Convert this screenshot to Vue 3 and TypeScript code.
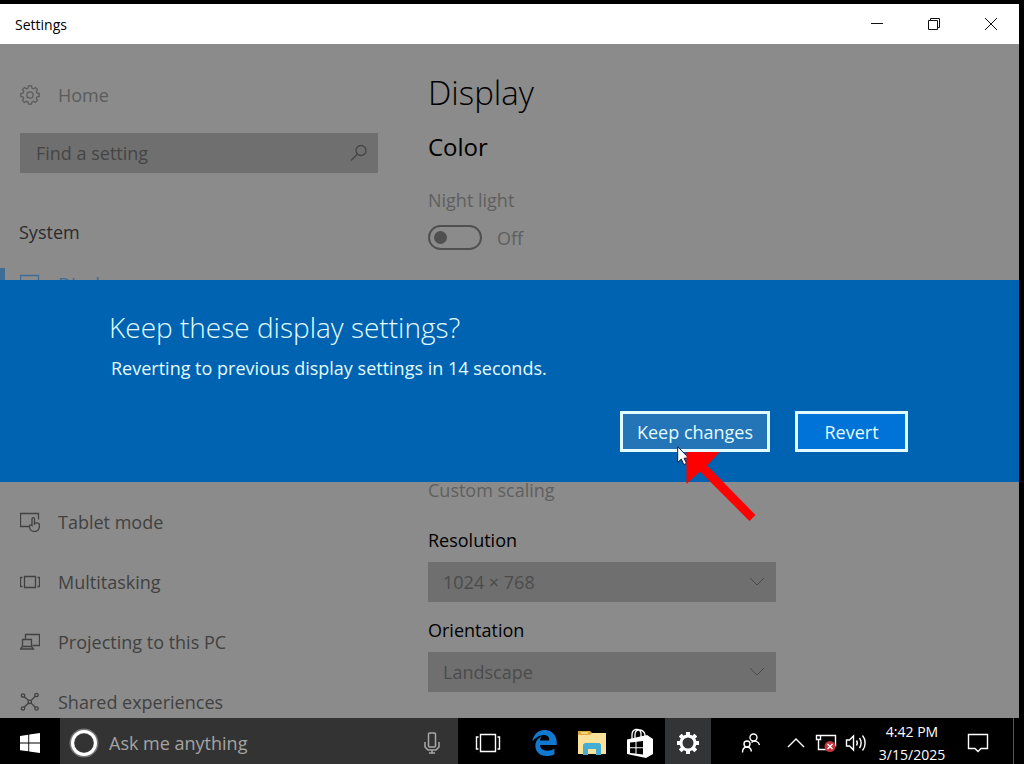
<script setup lang="ts">
import { ref } from 'vue'

const search = ref('')
const ask = ref('')
const nightLight = ref(false)
const resolution = ref('1024 × 768')
const orientation = ref('Landscape')
</script>

<template>
  <div class="desktop">
    <div class="window">
      <header class="titlebar">
        <span class="window-title">Settings</span>
        <button class="caption" type="button" aria-label="Minimize">
          <svg width="14" height="14" viewBox="0 0 14 14"><path d="M1 6.500h12" /></svg>
        </button>
        <button class="caption" type="button" aria-label="Restore">
          <svg width="14" height="14" viewBox="0 0 14 14"><path d="M1.500 3.500h9v9h-9zM3.500 3.500v-2h9v9h-2" /></svg>
        </button>
        <button class="caption" type="button" aria-label="Close">
          <svg width="14" height="14" viewBox="0 0 14 14"><path d="M1 1l12 12M13 1L1 13" /></svg>
        </button>
      </header>

      <div class="body">
        <aside class="sidebar">
          <a class="nav-item home" href="#home">
            <svg class="icon" viewBox="0 0 20 20">
              <path d="M8.500 .8h3l.5 2.300 1.500.6 2-1.200 2 2-1.200 2 .6 1.500 2.300.5v3l-2.300.5-.6 1.500 1.200 2-2 2-2-1.200-1.500.6-.5 2.300h-3L8 16.900l-1.500-.6-2 1.200-2-2 1.200-2-.6-1.500-2.300-.5v-3L3.100 8l.6-1.500-1.200-2 2-2 2 1.200L8 3.100z" />
              <circle cx="10" cy="10" r="3.200" />
            </svg>
            Home
          </a>
          <div class="find">
            <input v-model="search" type="text" placeholder="Find a setting" aria-label="Find a setting" />
            <svg class="find-icon" width="18" height="18" viewBox="0 0 18 18"><circle cx="11" cy="6.500" r="5" /><path d="M7.300 10.200L1 16.500" /></svg>
          </div>
          <h2 class="group">System</h2>
          <nav class="nav">
            <a class="nav-item active" href="#display">
              <svg class="icon" viewBox="0 0 20 20"><path d="M.5 1.500h18v12H.5zM5 17.500h9M9.500 14v3" /></svg>
              Display
            </a>
          </nav>
          <nav class="nav lower">
            <a class="nav-item" href="#tablet">
              <svg class="icon" viewBox="0 0 20 20">
                <path d="M9 14.500H.5v-13h18v6" />
                <path d="M12 13.500V6.800c0-1.700 2.500-1.700 2.500 0v4h2.500c1.600 0 2.500 1 2.500 2.500 0 3.600-1.500 6.200-5 6.200-2.800 0-4.600-1.600-5-4.500-.2-1.600 1.200-3 2.500-1.500zM14.500 11v2" />
              </svg>
              Tablet mode
            </a>
            <a class="nav-item" href="#multitasking">
              <svg class="icon" viewBox="0 0 20 20"><path d="M4.500 4.500h11v11h-11zM2.500 5.500h-2v9h2M17.500 5.500h2v9h-2" /></svg>
              Multitasking
            </a>
            <a class="nav-item" href="#projecting">
              <svg class="icon" viewBox="0 0 20 20"><path d="M5.500 7V2.500h14v11h-7M2.500 7.500h9v7h-9zM2.500 14.500l-2 2.500h13l-2-2.500" /></svg>
              Projecting to this PC
            </a>
            <a class="nav-item" href="#shared">
              <svg class="icon" viewBox="0 0 20 20">
                <circle cx="3" cy="3.500" r="1.700" /><circle cx="16.500" cy="3" r="1.700" /><circle cx="3" cy="16.500" r="1.700" /><circle cx="16.500" cy="16.500" r="1.700" /><circle cx="9.800" cy="9.800" r="1.700" />
                <path d="M4.200 4.700l4.400 3.900M11 8.600l4.300-4.300M8.600 11l-4.400 4.300M11 11l4.300 4.300" />
              </svg>
              Shared experiences
            </a>
          </nav>
        </aside>

        <main class="content">
          <h1>Display</h1>
          <h2 class="section">Color</h2>
          <label class="dim" for="night">Night light</label>
          <div class="toggle-row">
            <input id="night" v-model="nightLight" type="checkbox" role="switch" />
            <span>{{ nightLight ? 'On' : 'Off' }}</span>
          </div>
          <a class="dim scaling" href="#scaling">Custom scaling</a>
          <label class="field-label" for="resolution">Resolution</label>
          <div class="select">
            <select id="resolution" v-model="resolution">
              <option>1024 × 768</option>
            </select>
            <svg width="16" height="10" viewBox="0 0 16 10"><path d="M1 1l7 7 7-7" /></svg>
          </div>
          <label class="field-label" for="orientation">Orientation</label>
          <div class="select">
            <select id="orientation" v-model="orientation">
              <option>Landscape</option>
            </select>
            <svg width="16" height="10" viewBox="0 0 16 10"><path d="M1 1l7 7 7-7" /></svg>
          </div>
        </main>

        <div class="overlay">
          <section class="dialog" role="dialog" aria-labelledby="dialog-title">
            <h2 id="dialog-title">Keep these display settings?</h2>
            <p>Reverting to previous display settings in 14 seconds.</p>
            <div class="actions">
              <div class="keep-wrap">
                <button class="keep" type="button">Keep changes</button>
                <svg class="pointer" width="80" height="76" viewBox="0 0 80 76">
                  <path class="cursor" d="M.7.8v15.700l3.600-3.400 2.500 5.500 2.700-1.200-2.400-5.200h5z" />
                  <path class="arrow" d="M9.500 6h33L30 19.500 78.500 69l-6 6L23 25.500 9.500 38z" />
                </svg>
              </div>
              <button class="revert" type="button">Revert</button>
            </div>
          </section>
        </div>
      </div>
    </div>

    <footer class="taskbar">
      <button class="start" type="button" aria-label="Start">
        <svg width="20" height="20" viewBox="0 0 20 20"><path d="M0 2.900l8.300-1.200v7.800H0zM9.200 1.600L20 0v9.500H9.200zM0 10.400h8.300v7.900L0 17.200zM9.200 10.400H20V20L9.200 18.400z" /></svg>
      </button>
      <div class="cortana">
        <svg width="30" height="30" viewBox="0 0 30 30"><circle class="halo" cx="15" cy="15" r="12" /><circle class="ring" cx="15" cy="15" r="11.500" /></svg>
        <input v-model="ask" type="text" placeholder="Ask me anything" aria-label="Ask me anything" />
        <button class="mic" type="button" aria-label="Speak">
          <svg width="16" height="22" viewBox="0 0 16 22"><rect x="4.500" y="1" width="7" height="14" rx="1" /><path d="M1 10v5l3 3h8l3-3v-5M8 18v3M5 21h6" /></svg>
        </button>
      </div>
      <button class="task view" type="button" aria-label="Task view">
        <svg class="line" width="26" height="20" viewBox="0 0 26 20"><path d="M5.500 1.500h15v17h-15zM3.500 4h-2v12h2M22.500 4h2v12h-2" /></svg>
      </button>
      <button class="task" type="button" aria-label="Edge">
        <svg width="27" height="28" viewBox="0 0 512 512"><path fill="#1179d0" d="M25.714 228.163c.111-.162.23-.323.342-.485-.021.162-.045.323-.065.485h-.277zm460.572 15.508c0-44.032-7.754-84.465-28.801-122.405C416.498 47.879 343.912 8.001 258.893 8.001 118.962 7.724 40.617 113.214 26.056 227.679c42.429-61.312 117.073-121.376 220.375-124.966 0 0 109.666 0 99.419 104.957H169.997c6.369-37.386 18.554-58.986 34.339-78.926-75.048 34.900-121.850 96.096-120.742 188.315.83 71.448 50.124 144.836 120.743 171.976 83.357 31.847 192.776 7.200 240.132-21.321V363.307c-80.864 56.494-270.871 60.925-272.255-67.572h314.073v-52.064z" /></svg>
      </button>
      <button class="task" type="button" aria-label="File Explorer">
        <svg width="28" height="24" viewBox="0 0 28 24">
          <path fill="#dba93f" d="M0 0h12l2 2v3H0z" /><path fill="#f8d36f" d="M3 1h7v2H3z" />
          <path fill="#fbe29a" d="M0 4h12l2-2h14v21H0z" />
          <path fill="#45add3" d="M5 24V13.500L7 12h14.500l1.500 1.500V24h-5v-6h-8v6z" /><path fill="#fbe29a" d="M10 18h8v5h-8z" />
        </svg>
      </button>
      <button class="task" type="button" aria-label="Store">
        <svg width="28" height="30" viewBox="0 0 28 30">
          <path fill="none" stroke="#fff" stroke-width="1.300" d="M6 11V7c0-6 7-8 9-2v5M9 10V6c1-6 9-5 10 1v4" />
          <path fill="#fff" fill-rule="evenodd" d="M1 11.500L21 7l6 4v15l-7 4-19-4zM4 14.500v4.800h5.500V14zM10.500 13.800v5.500H17v-6.200zM4 20.300v4.700l5.500.6v-5.300zM10.500 20.300v5.500l6.500.8v-6.300z" />
        </svg>
      </button>
      <button class="task current" type="button" aria-label="Settings">
        <svg width="24" height="24" viewBox="0 0 24 24">
          <circle cx="12" cy="12" r="7" fill="none" stroke="#fff" stroke-width="3" />
          <path stroke="#fff" stroke-width="4" d="M12 1v4M12 19v4M1 12h4M19 12h4M4.200 4.200L7 7M17 17l2.800 2.800M4.200 19.800L7 17M17 7l2.800-2.800" />
        </svg>
      </button>
      <div class="tray">
        <button class="people" type="button" aria-label="People">
          <svg class="line" width="20" height="20" viewBox="0 0 20 20"><circle cx="12.500" cy="4.500" r="3.500" /><circle cx="6" cy="11" r="3" /><path d="M1.500 19.500c0-3 1.500-5.500 4.500-5.500s4 2 4.500 4.500M10.500 9.500c3-2.500 7-1.500 8 2.500" /></svg>
        </button>
        <button type="button" aria-label="Show hidden icons">
          <svg class="line" width="18" height="10" viewBox="0 0 18 10"><path d="M1 9l8-8 8 8" /></svg>
        </button>
        <button type="button" aria-label="Network">
          <svg class="line" width="22" height="20" viewBox="0 0 22 20">
            <path d="M6 2.500h14.500v11M1.500 2.500h4v4h-4zM3.500 6.500v10h9" />
            <circle cx="15" cy="13.500" r="5.500" fill="#c3343c" stroke="none" /><path d="M12.500 11l5 5M17.500 11l-5 5" />
          </svg>
        </button>
        <button type="button" aria-label="Volume">
          <svg class="line" width="22" height="18" viewBox="0 0 22 18"><path d="M1.500 6h3l4-4v14l-4-4h-3zM11.500 6.500c1 1.500 1 3.500 0 5M14.500 4c2 3 2 7 0 10M17.500 1.500c3.500 4 3.500 11 0 15" /></svg>
        </button>
        <time class="clock" datetime="2025-03-15T16:42"><span>4:42 PM</span><span>3/15/2025</span></time>
        <button class="notices" type="button" aria-label="Action center">
          <svg class="line" width="22" height="20" viewBox="0 0 22 20"><path d="M1.500 1.500h19v14h-6.500L11 18.500l-3-3H1.500z" /></svg>
        </button>
        <button class="peek" type="button" aria-label="Show desktop"></button>
      </div>
    </footer>
  </div>
</template>

<style>
body {
  background: #000;
}
</style>

<style scoped>
* {
  box-sizing: border-box;
}

.desktop {
  display: flex;
  flex-direction: column;
  height: 100vh;
  padding-top: 4px;
  background: #000;
  font-family: "Open Sans", "Noto Sans", sans-serif;
  font-size: 18px;
  line-height: 24px;
}

button,
input,
select {
  margin: 0;
  padding: 0;
  border: 0;
  background: none;
  color: inherit;
  font: inherit;
}

button {
  display: flex;
  align-items: center;
  justify-content: center;
}

h1,
h2,
p {
  margin: 0;
  font-weight: 400;
}

svg {
  display: block;
  flex: none;
}

.window {
  flex: 1;
  display: flex;
  flex-direction: column;
  min-height: 0;
  margin-right: 5px;
}

.titlebar {
  display: flex;
  height: 40px;
  background: #fff;
  color: #000;
}

.window-title {
  flex: 1;
  padding-left: 15px;
  font-size: 14px;
  line-height: 42px;
}

.caption {
  width: 57px;
}

.caption svg {
  fill: none;
  stroke: #111;
}

.body {
  position: relative;
  flex: 1;
  display: flex;
  min-height: 0;
  overflow: hidden;
  background: #8b8b8b;
}

.sidebar {
  flex: 0 1 428px;
  padding-top: 21px;
}

.nav-item {
  display: flex;
  align-items: center;
  gap: 18px;
  height: 60px;
  padding-left: 20px;
  color: #414141;
  text-decoration: none;
}

.icon {
  width: 20px;
  height: 20px;
  fill: none;
  stroke: currentColor;
  stroke-width: 1.3;
}

.home {
  color: #5c5c5c;
}

.find {
  display: flex;
  align-items: center;
  height: 40px;
  margin: 8px 50px 0 20px;
  padding: 0 10px 0 16px;
  background: #6f6f6f;
  color: #454545;
}

.find input {
  flex: 1;
  min-width: 0;
}

.find input::placeholder {
  color: #454545;
  opacity: 1;
}

.find-icon {
  fill: none;
  stroke: #454545;
  stroke-width: 1.3;
}

.group {
  margin: 47px 0 10px 19px;
  color: #2b2b2b;
  font-size: 18px;
}

.nav-item.active {
  height: 32px;
  padding-left: 15px;
  border-left: 5px solid #3f6c94;
  color: #3f6c94;
}

.nav {
  padding-top: 14px;
}

.nav.lower {
  padding-top: 192px;
}

.content {
  flex: 1;
  padding: 25px 20px 0 0;
  color: #000;
}

h1 {
  font-size: 33px;
  font-weight: 300;
  line-height: 48px;
}

.section {
  margin: 14px 0 25px;
  font-size: 24px;
  line-height: 32px;
}

.dim {
  display: block;
  color: #5f5f5f;
}

.toggle-row {
  display: flex;
  align-items: center;
  gap: 15px;
  margin-top: 13px;
  color: #5f5f5f;
}

.toggle-row input {
  display: flex;
  align-items: center;
  width: 54px;
  height: 25px;
  padding-left: 4px;
  border: 2px solid #505050;
  border-radius: 13px;
  appearance: none;
}

.toggle-row input::before {
  width: 13px;
  height: 13px;
  border-radius: 50%;
  background: #505050;
  content: "";
}

.toggle-row input:checked {
  justify-content: flex-end;
  padding-right: 4px;
}

.scaling {
  margin-top: 228px;
  text-decoration: none;
}

.field-label {
  display: block;
  margin: 16px 0 10px;
}

.scaling + .field-label {
  margin-top: 26px;
}

.select {
  display: grid;
  align-items: center;
  max-width: 348px;
}

.select select,
.select svg {
  grid-area: 1 / 1;
}

.select select {
  height: 40px;
  padding: 0 40px 0 15px;
  border-radius: 0;
  background: #6f6f6f;
  color: #4b4b4b;
  appearance: none;
}

.select svg {
  justify-self: end;
  margin-right: 11px;
  fill: none;
  stroke: #484848;
  pointer-events: none;
}

.overlay {
  position: absolute;
  inset: 0;
  display: flex;
  align-items: center;
}

.dialog {
  flex: 1;
  padding: 29px 111px 30px 109px;
  background: #0063b1;
  color: #e2fbff;
}

.dialog h2 {
  font-size: 28px;
  font-weight: 300;
  line-height: 36px;
}

.dialog p {
  margin: 11px 0 31px 2px;
}

.actions {
  display: flex;
  justify-content: flex-end;
  gap: 25px;
}

.actions button {
  height: 41px;
  border: 3px solid #e2fbff;
}

.keep-wrap {
  position: relative;
}

.actions .keep {
  width: 150px;
  background: #2474b8;
}

.actions .revert {
  width: 113px;
  background: #0073d9;
}

.pointer {
  position: absolute;
  top: 35px;
  left: 57px;
  pointer-events: none;
}

.cursor {
  fill: #fff;
  stroke: #111a33;
}

.arrow {
  fill: #f00;
}

.taskbar {
  display: flex;
  height: 46px;
  color: #fff;
}

.start {
  width: 60px;
  padding-top: 4px;
}

.start svg {
  fill: #fff;
}

.cortana {
  flex: 0 1 398px;
  display: flex;
  align-items: center;
  gap: 10px;
  padding: 4px 18px 0 9px;
  background: #333;
}

.cortana input {
  flex: 1;
  min-width: 0;
}

.cortana input::placeholder {
  color: #a3a3a3;
  opacity: 1;
}

.halo {
  fill: none;
  stroke: #777;
  stroke-width: 5;
}

.ring {
  fill: none;
  stroke: #fff;
  stroke-width: 3;
}

.mic svg {
  fill: none;
  stroke: #a8a8a8;
  stroke-width: 1.5;
}

.task {
  width: 48px;
  padding-top: 4px;
}

.task.view {
  width: 60px;
  margin-right: 2px;
}

.task.current {
  width: 46px;
  margin-left: 1px;
  background: #333436;
}

.line {
  fill: none;
  stroke: #fff;
  stroke-width: 1.4;
}

.tray {
  display: flex;
  align-items: stretch;
  margin-left: auto;
}

.tray button {
  width: 30px;
  padding-top: 4px;
}

.tray .people {
  width: 40px;
  margin-right: 10px;
}

.clock {
  display: flex;
  flex-direction: column;
  align-items: center;
  width: 82px;
  padding-top: 2px;
  font-size: 14px;
  line-height: 23px;
}

.tray .notices {
  width: 50px;
}

.tray .peek {
  width: 11px;
  margin-left: 10px;
  border-left: 1px solid #555;
}
</style>
